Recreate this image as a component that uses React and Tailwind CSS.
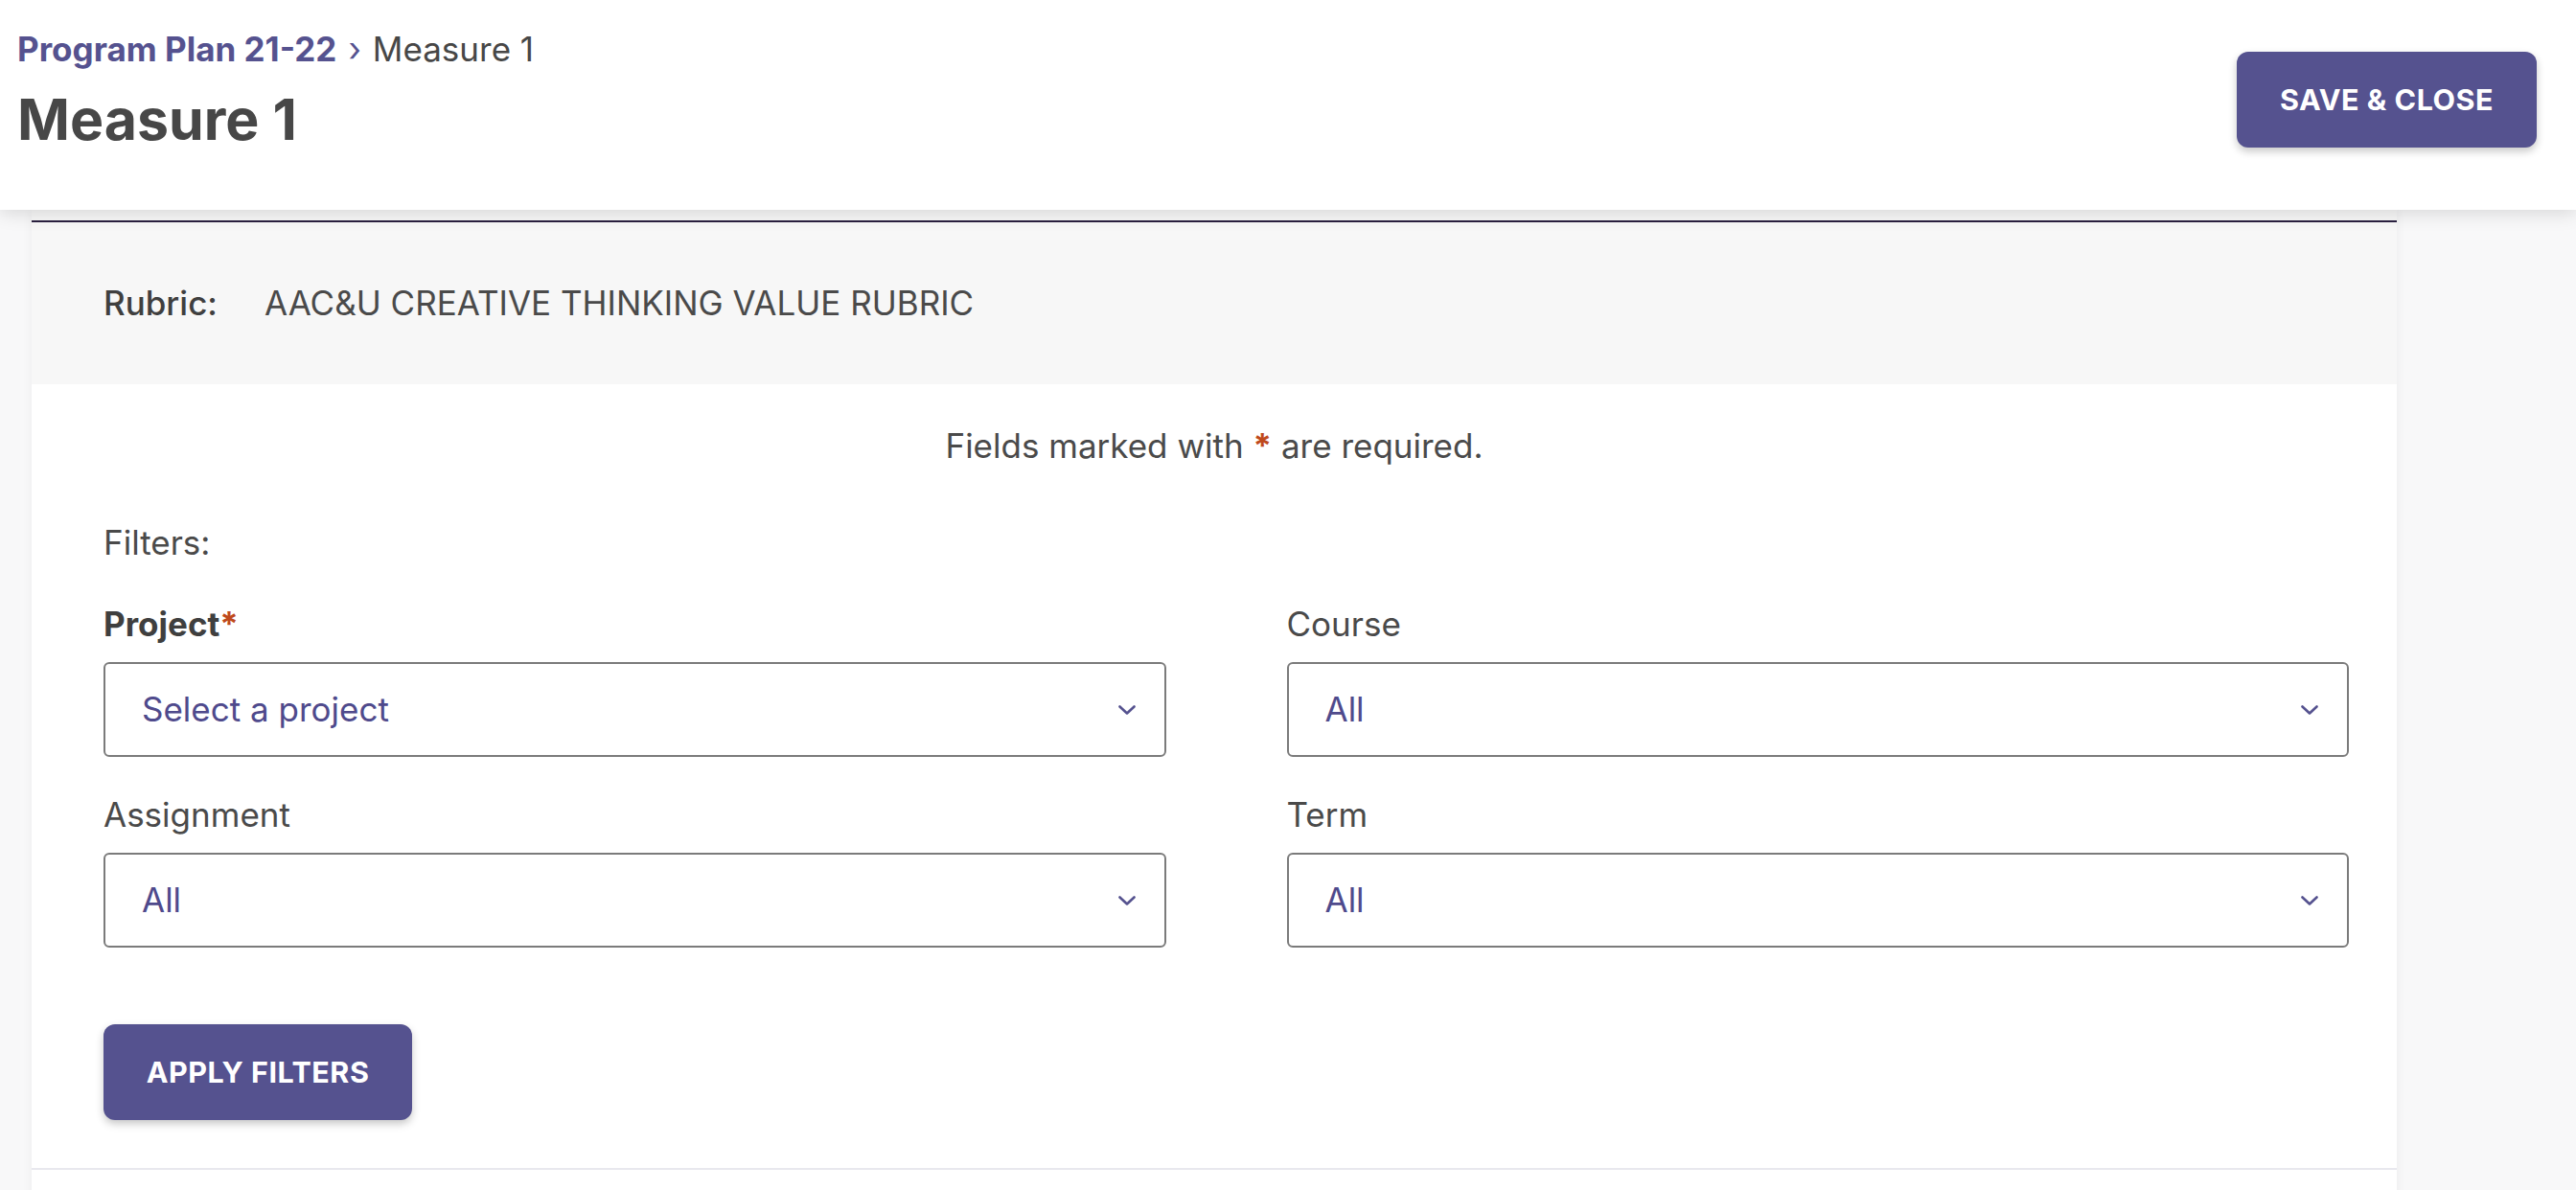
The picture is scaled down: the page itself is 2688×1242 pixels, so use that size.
import React from 'react'

// Measure editor: header with breadcrumb + save, then a rubric card with filter selects

const Chevron = () => (
  <svg width="18" height="10" viewBox="0 0 18 10" fill="none" className="shrink-0">
    <path d="M1.5 1.5 L9 8.5 L16.5 1.5" stroke="#55528f" strokeWidth="2.6" strokeLinecap="round" strokeLinejoin="round" />
  </svg>
)

const Select = ({ value }) => (
  <div className="flex items-center justify-between h-[99px] border-2 border-[#7b7b7b] rounded-[6px] bg-white pl-[38px] pr-[30px]">
    <span className="text-[35px] text-[#4f4a8c]">{value}</span>
    <Chevron />
  </div>
)

const Field = ({ label, required, value }) => (
  <div className="flex flex-col">
    <div className={`h-[40px] leading-[40px] text-[35px] ${required ? 'font-bold text-[#3f3f3f]' : 'text-[#4a4a4a]'}`}>
      {label}
      {required && <span className="text-[#bf4a1c]">*</span>}
    </div>
    <div className="mt-[20px]">
      <Select value={value} />
    </div>
  </div>
)

const Button = ({ children, className = '' }) => (
  <button
    className={`bg-[#55528f] text-white font-bold uppercase text-[30.5px] tracking-[0.5px] rounded-[12px] shadow-[0_4px_8px_rgba(0,0,0,0.22)] ${className}`}
  >
    {children}
  </button>
)

export default function App() {
  return (
    <div className="w-full h-[1242px] overflow-hidden bg-[#f8f8f9] text-[#4a4a4a]" style={{ fontFamily: 'Inter, "Liberation Sans", sans-serif' }}>
      {/* header */}
      <div className="relative z-10 h-[219px] bg-white shadow-[0_4px_18px_rgba(0,0,0,0.13)] flex items-start justify-between pl-[18px] pr-[41px]">
        <div className="pt-[27px]">
          <div className="flex items-center text-[35px] leading-[48px]">
            <span className="font-bold text-[#55528f]">Program Plan 21-22</span>
            <span className="mx-[12px] text-[#55528f]">›</span>
            <span className="text-[#474747]">Measure 1</span>
          </div>
          <h1 className="mt-[14px] text-[59px] leading-[72px] font-bold text-[#474747]">Measure 1</h1>
        </div>
        <Button className="mt-[54px] w-[313px] h-[100px]">Save &amp; Close</Button>
      </div>

      {/* card */}
      <div className="ml-[33px] w-[2468px] h-[1100px] bg-white shadow-[0_0_10px_rgba(0,0,0,0.06)]">
        <div className="h-[11px] bg-[#f7f7f7]" />
        <div className="h-[2px] bg-[#2a2040]" />
        <div className="h-[169px] bg-[#f7f7f7] flex items-center pl-[75px] text-[35px]">
          <span className="font-medium text-[#3f3f3f] w-[168px]">Rubric:</span>
          <span>AAC&amp;U CREATIVE THINKING VALUE RUBRIC</span>
        </div>

        <div className="border-b-2 border-[#e8e8ee] pt-[44px] pb-[50px]">
          <p className="text-center text-[35px] leading-[40px]">
            Fields marked with <span className="text-[#bf4a1c] font-bold">*</span> are required.
          </p>

          <div className="pl-[75px] pr-[50px]">
            <div className="mt-[61px] text-[35px] leading-[40px]">Filters:</div>

            <div className="mt-[45px] grid grid-cols-2 gap-x-[126px] gap-y-[40px]">
              <Field label="Project" required value="Select a project" />
              <Field label="Course" value="All" />
              <Field label="Assignment" value="All" />
              <Field label="Term" value="All" />
            </div>

            <Button className="mt-[80px] w-[322px] h-[100px]">Apply Filters</Button>
          </div>
        </div>
      </div>
    </div>
  )
}
